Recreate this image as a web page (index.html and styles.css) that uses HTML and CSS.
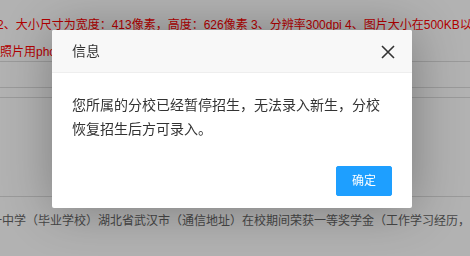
FILE: index.html
```html
<!DOCTYPE html>
<html lang="zh-CN">
<head>
<meta charset="utf-8">
<title>信息</title>
<link rel="stylesheet" href="styles.css">
</head>
<body>
<div class="page">
  <div class="tip tip-first">2、大小尺寸为宽度：413像素，高度：626像素 3、分辨率300dpi 4、图片大小在500KB以内</div>
  <div class="tip tip-second row">照片用photoshop等软件处理后上传</div>
  <div class="row row-a"></div>
  <div class="row row-b"></div>
  <div class="row row-c"></div>
  <div class="desc">第一中学（毕业学校）湖北省武汉市（通信地址）在校期间荣获一等奖学金（工作学习经历，</div>
</div>
<div class="shade"></div>
<div class="layer">
  <div class="layer-title">信息</div>
  <button class="layer-close" type="button" aria-label="关闭">
    <svg width="14" height="14" viewBox="0 0 14 14"><path d="M1 1L13 13M13 1L1 13" stroke="#333" stroke-width="1.6" fill="none"/></svg>
  </button>
  <div class="layer-content">您所属的分校已经暂停招生，无法录入新生，分校恢复招生后方可录入。</div>
  <div class="layer-btns"><a class="layer-btn">确定</a></div>
</div>
</body>
</html>
```
FILE: styles.css
```css
html, body {
  margin: 0;
  padding: 0;
  background: #fff;
  font-family: "Liberation Sans", "Noto Sans CJK SC", sans-serif;
  overflow: hidden;
}
.page {
  width: 470px;
  height: 256px;
  overflow: hidden;
}
.tip {
  color: #f00;
  font-size: 12px;
  line-height: 18px;
  white-space: nowrap;
  margin-left: -3px;
}
.tip-first {
  padding-top: 16px;
}
.tip-second {
  margin-top: 9px;
  margin-left: 0;
}
.row {
  border-bottom: 1px solid #ddd;
}
.row-a { height: 25px; }
.row-b { height: 9px; }
.row-c { height: 98px; }
.desc {
  margin-top: 15px;
  margin-left: -22px;
  color: #666;
  font-size: 12px;
  line-height: 18px;
  white-space: nowrap;
}
.shade {
  position: fixed;
  inset: 0;
  background: rgba(0, 0, 0, 0.3);
}
.layer {
  position: absolute;
  left: 52px;
  top: 30px;
  width: 360px;
  background: #fff;
  border-radius: 2px;
  box-shadow: 1px 1px 50px rgba(0, 0, 0, 0.3);
}
.layer-title {
  height: 42px;
  line-height: 42px;
  padding: 0 80px 0 20px;
  font-size: 14px;
  color: #333;
  background: #f8f8f8;
  border-bottom: 1px solid #eee;
  border-radius: 2px 2px 0 0;
}
.layer-close {
  position: absolute;
  right: 17px;
  top: 15px;
  width: 14px;
  height: 14px;
  padding: 0;
  border: 0;
  background: none;
  display: block;
}
.layer-close svg { display: block; }
.layer-content {
  padding: 20px;
  line-height: 24px;
  font-size: 14px;
  color: #333;
}
.layer-btns {
  padding: 0 15px 12px;
  text-align: right;
}
.layer-btn {
  display: inline-block;
  height: 28px;
  line-height: 28px;
  margin: 5px 5px 0;
  padding: 0 15px;
  border: 1px solid #1e9fff;
  background: #1e9fff;
  color: #fff;
  font-size: 12px;
  border-radius: 2px;
  vertical-align: top;
}
```
